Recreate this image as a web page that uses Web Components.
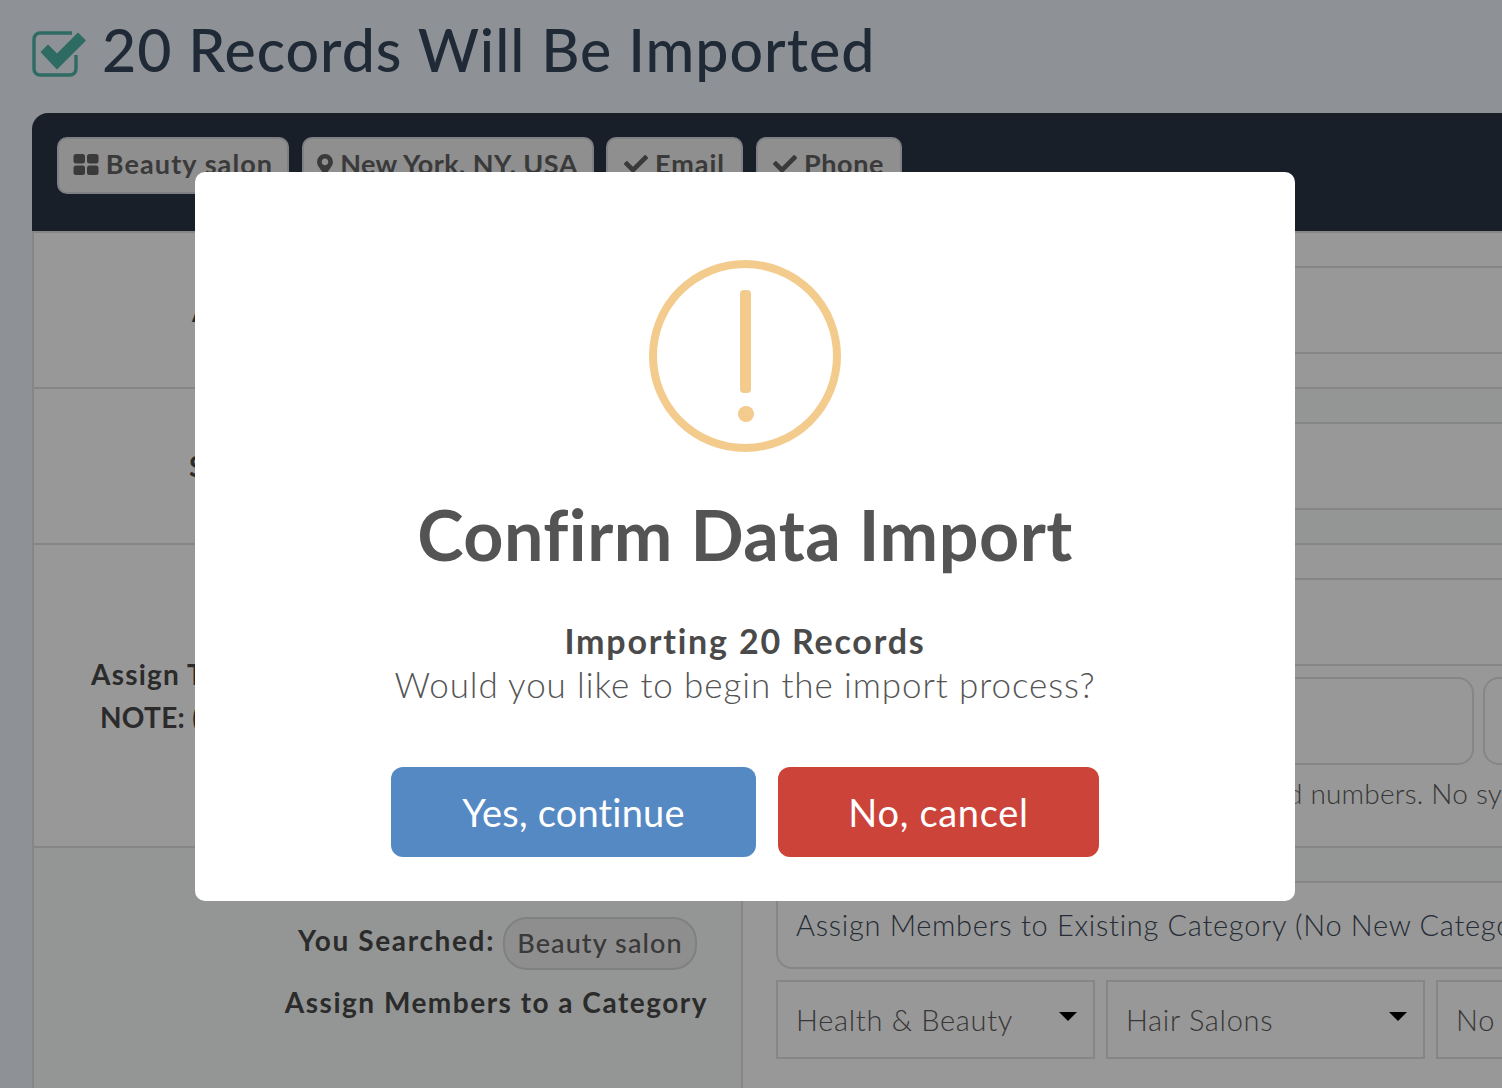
<!DOCTYPE html>
<html>
<head>
<meta charset="utf-8">
<title>Import</title>
<style>
html, body { margin: 0; height: 1088px; overflow: hidden; }
body { background: #edf2fa; font-family: "Lato", "Liberation Sans", sans-serif; color: #484848; }
</style>
</head>
<body>
<import-page>
    <page-title slot="title">20 Records Will Be Imported</page-title>
    <tag-bar slot="tags">
        <tag-chip icon="grid" style="--w:232px;--ls:1.1px">Beauty salon</tag-chip>
        <tag-chip icon="pin" style="--w:292px;--ls:.4px">New York, NY, USA</tag-chip>
        <tag-chip icon="check" style="--w:137px;--ls:1px">Email</tag-chip>
        <tag-chip icon="check" style="--w:146px;--ls:.6px">Phone</tag-chip>
    </tag-bar>

    <form-row slot="rows" style="--h:156px">
        <row-label slot="label" style="--pad-left:158px;--pad-top:57px">A</row-label>
        <sub-row style="--h:35px"></sub-row>
        <sub-row style="--h:86px"></sub-row>
        <sub-row style="--h:33px" last></sub-row>
    </form-row>
    <form-row slot="rows" style="--h:156px">
        <row-label slot="label" style="--pad-left:155px;--pad-top:56px">S</row-label>
        <sub-row style="--h:35px" tint></sub-row>
        <sub-row style="--h:86px"></sub-row>
        <sub-row style="--h:33px" tint last></sub-row>
    </form-row>
    <form-row slot="rows" style="--h:303px">
        <row-label slot="label" style="--pad-left:57px;--pad-top:108px">Assign T<br><span style="margin-left:9px;letter-spacing:.3px">NOTE: (</span></row-label>
        <sub-row style="--h:35px"></sub-row>
        <sub-row style="--h:86px"></sub-row>
        <sub-row style="--h:180px" last>
            <div style="display:flex;gap:9px;padding:11px 0 0 33px;width:960px">
                <text-box style="--w:698px"></text-box>
                <text-box style="--w:200px"></text-box>
            </div>
            <hint-text style="--pad-left:544px">d numbers. No symbols</hint-text>
        </sub-row>
    </form-row>
    <form-row slot="rows" style="--h:241px" tint last>
        <search-summary slot="label"></search-summary>
        <sub-row style="--h:35px" tint></sub-row>
        <category-fields></category-fields>
    </form-row>
</import-page>

<confirm-modal>
    <span slot="heading">Confirm Data Import</span>
    <span slot="lead">Importing 20 Records</span>
    <span slot="body">Would you like to begin the import process?</span>
    <modal-button slot="actions" style="--w:365px;--bg:#5589c4;--ls:.2px">Yes, continue</modal-button>
    <modal-button slot="actions" style="--w:321px;--bg:#cc433a;--ls:.7px">No, cancel</modal-button>
</confirm-modal>

<script>
const ICONS = {
    grid: '<svg width="26" height="21" viewBox="0 0 26 21"><rect x="0.5" y="0" width="11.5" height="9.5" rx="2.5"/><rect x="14" y="0" width="11.5" height="9.5" rx="2.5"/><rect x="0.5" y="11.5" width="11.5" height="9.5" rx="2.5"/><rect x="14" y="11.5" width="11.5" height="9.5" rx="2.5"/></svg>',
    pin: '<svg width="16" height="21" viewBox="0 0 384 512"><path d="M172.268 501.67C26.97 291.031 0 269.413 0 192 0 85.961 85.961 0 192 0s192 85.961 192 192c0 77.413-26.97 99.031-172.268 309.67-9.535 13.774-29.93 13.773-39.464 0zM192 272c44.183 0 80-35.817 80-80s-35.817-80-80-80-80 35.817-80 80 35.817 80 80 80z"/></svg>',
    check: '<svg width="24" height="24" viewBox="0 0 512 512"><path d="M173.898 439.404l-166.4-166.4c-9.997-9.997-9.997-26.206 0-36.204l36.203-36.204c9.997-9.998 26.207-9.998 36.204 0L192 312.69 432.095 72.596c9.997-9.997 26.207-9.997 36.204 0l36.203 36.204c9.997 9.997 9.997 26.206 0 36.204l-294.4 294.401c-9.998 9.997-26.207 9.997-36.204-.001z"/></svg>'
};

class ImportPage extends HTMLElement {
    constructor() {
        super();
        this.attachShadow({ mode: 'open' });
        this.shadowRoot.innerHTML = `
        <style>
            :host { display: block; padding: 0 0 0 32px; width: 1600px; height: 1088px; overflow: hidden; }
            .panel { width: 1568px; border-radius: 16px 16px 0 0; overflow: hidden; }
            .head { background: #283443; height: 118px; box-sizing: border-box; padding: 24px 25px; }
            .rows { border-left: 2px solid #dfdfdf; border-top: 2px solid #dfdfdf; }
        </style>
        <slot name="title"></slot>
        <div class="panel">
            <div class="head"><slot name="tags"></slot></div>
            <div class="rows"><slot name="rows"></slot></div>
        </div>`;
    }
}

class PageTitle extends HTMLElement {
    constructor() {
        super();
        this.attachShadow({ mode: 'open' });
        this.shadowRoot.innerHTML = `
        <style>
            :host { display: flex; align-items: center; gap: 17px; height: 113px; box-sizing: border-box; padding-bottom: 15px;
                font-size: 59px; font-weight: 500; color: #34465a; letter-spacing: 1px; white-space: nowrap; }
            svg { flex: none; margin-top: 10px; margin-right: -1px; }
        </style>
        <svg width="54" height="46" viewBox="0 0 54 46">
            <path d="M44 24v14a6 6 0 0 1-6 6H8a6 6 0 0 1-6-6V8a6 6 0 0 1 6-6h32" fill="none" stroke="#4eb2a3" stroke-width="3.4"/>
            <path d="M9.5 21l6.500-6.500 9 9L46 2.500l7 7-28 28z" fill="#4eb2a3" stroke="#4eb2a3" stroke-width="1.5" stroke-linejoin="round"/>
        </svg>
        <span><slot></slot></span>`;
    }
}

class TagBar extends HTMLElement {
    constructor() {
        super();
        this.attachShadow({ mode: 'open' });
        this.shadowRoot.innerHTML = `
        <style>:host { display: flex; gap: 12.5px; }</style>
        <slot></slot>`;
    }
}

class TagChip extends HTMLElement {
    constructor() {
        super();
        this.attachShadow({ mode: 'open' });
        const icon = ICONS[this.getAttribute('icon')] || '';
        this.shadowRoot.innerHTML = `
        <style>
            :host { display: flex; align-items: center; justify-content: center; gap: 7px; width: var(--w); height: 57px; box-sizing: border-box;
                background: #eeeeee; border: 2px solid #d4d5da; border-radius: 10px; font-size: 27px; font-weight: 700; color: #616161;
                letter-spacing: var(--ls); padding-bottom: 4px; white-space: nowrap; }
            svg { fill: #616161; display: block; margin-top: 1px; }
        </style>
        ${icon}<span><slot></slot></span>`;
    }
}

class FormRow extends HTMLElement {
    constructor() {
        super();
        this.attachShadow({ mode: 'open' });
        this.shadowRoot.innerHTML = `
        <style>
            :host { display: grid; grid-template-columns: 709px 1fr; box-sizing: border-box; height: var(--h); background: #fdfdfd; border-bottom: 2px solid #dfdfdf; }
            :host([tint]) { background: #f7faf8; }
            :host([last]) { border-bottom: 0; }
            .left { border-right: 2px solid #dfdfdf; }
            .right { background: #fdfdfd; }
        </style>
        <div class="left"><slot name="label"></slot></div>
        <div class="right"><slot></slot></div>`;
    }
}

class RowLabel extends HTMLElement {
    constructor() {
        super();
        this.attachShadow({ mode: 'open' });
        this.shadowRoot.innerHTML = `
        <style>
            :host { display: block; padding: var(--pad-top) 0 0 var(--pad-left); font-size: 28px; line-height: 43px; font-weight: 700; color: #484848; letter-spacing: 1.2px; white-space: nowrap; }
        </style>
        <slot></slot>`;
    }
}

class SubRow extends HTMLElement {
    constructor() {
        super();
        this.attachShadow({ mode: 'open' });
        this.shadowRoot.innerHTML = `
        <style>
            :host { display: block; box-sizing: border-box; height: var(--h); background: #fdfdfd; border-bottom: 2px solid #dfdfdf; overflow: hidden; }
            :host([tint]) { background: #f7faf8; }
            :host([last]) { border-bottom: 0; }
        </style>
        <slot></slot>`;
    }
}

class TextBox extends HTMLElement {
    constructor() {
        super();
        this.attachShadow({ mode: 'open' });
        this.shadowRoot.innerHTML = `
        <style>
            :host { display: block; flex: none; width: var(--w); height: 88px; box-sizing: border-box; border: 2px solid #dfdfdf; border-radius: 16px; }
        </style>`;
    }
}

class HintText extends HTMLElement {
    constructor() {
        super();
        this.attachShadow({ mode: 'open' });
        this.shadowRoot.innerHTML = `
        <style>
            :host { display: block; padding: 10px 0 0 var(--pad-left); font-size: 28px; line-height: 36px; font-weight: 300; letter-spacing: .2px; color: #5c5c5c; white-space: nowrap; }
        </style>
        <slot></slot>`;
    }
}

class SearchSummary extends HTMLElement {
    constructor() {
        super();
        this.attachShadow({ mode: 'open' });
        this.shadowRoot.innerHTML = `
        <style>
            :host { display: block; padding: 69px 33px 0 0; font-size: 28px; font-weight: 700; color: #484848; letter-spacing: 1.5px; text-align: right; white-space: nowrap; }
            .searched { display: flex; justify-content: flex-end; align-items: center; gap: 8px; margin-right: 11px; }
            .searched > span:first-child { margin-top: -7px; letter-spacing: 1.65px; }
            .pill { height: 53px; width: 194px; box-sizing: border-box; padding-bottom: 3px; display: flex; align-items: center; justify-content: center;
                border: 2px solid #d6d6d6; background: #ededed; border-radius: 24px; font-weight: 500; font-size: 27px; letter-spacing: 1.1px; color: #5f5f5f; }
            .assign { margin-top: 12px; line-height: 40px; }
        </style>
        <div class="searched"><span>You Searched:</span><span class="pill">Beauty salon</span></div>
        <div class="assign">Assign Members to a Category</div>`;
    }
}

class CategoryFields extends HTMLElement {
    constructor() {
        super();
        this.attachShadow({ mode: 'open' });
        this.shadowRoot.innerHTML = `
        <style>
            :host { display: block; padding: 0 0 0 33px; height: 205px; overflow: hidden; background: #fdfdfd; font-size: 29px; font-weight: 300; color: #3c4a5a; white-space: nowrap; }
            .assign { height: 86px; box-sizing: border-box; width: 900px; padding: 22px 0 0 18px; border: 2px solid #dfdfdf; border-top-color: transparent; border-radius: 16px; line-height: 36px; letter-spacing: .7px; overflow: hidden; }
            .selects { display: flex; gap: 11px; margin-top: 11px; }
        </style>
        <div class="assign">Assign Members to Existing Category (No New Category</div>
        <div class="selects">
            <select-box style="--w:319px">Health &amp; Beauty</select-box>
            <select-box style="--w:319px">Hair Salons</select-box>
            <select-box style="--w:319px">No</select-box>
        </div>`;
    }
}

class SelectBox extends HTMLElement {
    constructor() {
        super();
        this.attachShadow({ mode: 'open' });
        this.shadowRoot.innerHTML = `
        <style>
            :host { display: flex; align-items: center; justify-content: space-between; flex: none; width: var(--w); height: 79px; box-sizing: border-box;
                padding: 0 16px 0 18px; border: 2px solid #dfdfdf; color: #5c5c5c; letter-spacing: .7px; }
            i { width: 0; height: 0; border: 9px solid transparent; border-bottom: 0; border-top: 9px solid #000; margin-top: -6px; }
        </style>
        <span><slot></slot></span><i></i>`;
    }
}

class ConfirmModal extends HTMLElement {
    constructor() {
        super();
        this.attachShadow({ mode: 'open' });
        this.shadowRoot.innerHTML = `
        <style>
            :host { position: fixed; inset: 0; display: flex; justify-content: center; align-items: flex-start; box-sizing: border-box;
                padding: 172px 12px 0 0; background: rgba(0, 0, 0, .4); }
            .box { width: 1100px; height: 729px; box-sizing: border-box; padding-top: 88px; background: #fff; border-radius: 10px;
                display: flex; flex-direction: column; align-items: center; text-align: center; }
            .icon { width: 192px; height: 192px; display: block; flex: none; }
            h2 { margin: 37px 0 0; font-size: 70px; line-height: 90px; font-weight: 700; color: #545454; letter-spacing: 0.5px; }
            .lead { margin-top: 40px; font-size: 34px; line-height: 43px; font-weight: 700; letter-spacing: 1.8px; color: #4a4a4a; }
            .body { font-size: 35px; line-height: 44px; font-weight: 300; letter-spacing: .9px; color: #545454; }
            .actions { display: flex; gap: 22px; margin-top: 61px; }
        </style>
        <div class="box">
            <svg class="icon" viewBox="0 0 192 192" fill="none">
                <circle cx="96" cy="96" r="92" stroke="#f3cb8d" stroke-width="8"/>
                <rect x="91" y="30" width="11" height="103" rx="4" fill="#f3cb8d"/>
                <circle cx="97" cy="154" r="8" fill="#f3cb8d"/>
            </svg>
            <h2><slot name="heading"></slot></h2>
            <div class="lead"><slot name="lead"></slot></div>
            <div class="body"><slot name="body"></slot></div>
            <div class="actions"><slot name="actions"></slot></div>
        </div>`;
    }
}

class ModalButton extends HTMLElement {
    constructor() {
        super();
        this.attachShadow({ mode: 'open' });
        this.shadowRoot.innerHTML = `
        <style>
            :host { display: flex; align-items: center; justify-content: center; width: var(--w); height: 90px; background: var(--bg);
                border-radius: 12px; color: #fff; font-size: 38px; font-weight: 400; letter-spacing: var(--ls); }
        </style>
        <slot></slot>`;
    }
}

customElements.define('import-page', ImportPage);
customElements.define('page-title', PageTitle);
customElements.define('tag-bar', TagBar);
customElements.define('tag-chip', TagChip);
customElements.define('form-row', FormRow);
customElements.define('row-label', RowLabel);
customElements.define('sub-row', SubRow);
customElements.define('text-box', TextBox);
customElements.define('hint-text', HintText);
customElements.define('search-summary', SearchSummary);
customElements.define('category-fields', CategoryFields);
customElements.define('select-box', SelectBox);
customElements.define('confirm-modal', ConfirmModal);
customElements.define('modal-button', ModalButton);
</script>
</body>
</html>
